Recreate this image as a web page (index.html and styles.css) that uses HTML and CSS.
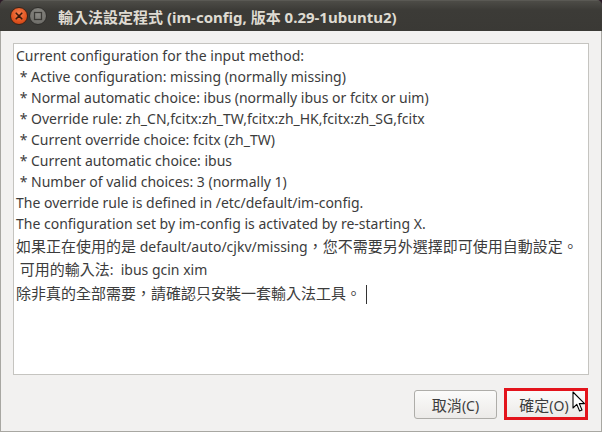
FILE: index.html
```html
<!DOCTYPE html>
<html lang="zh-Hant">
<head>
<meta charset="utf-8">
<title>輸入法設定程式</title>
<link rel="stylesheet" href="styles.css">
</head>
<body>
<div class="window">
  <div class="titlebar">
    <div class="wm-buttons">
      <span class="wm-btn close">
        <svg width="10" height="10" viewBox="0 0 10 10"><path d="M2.2 2.2 L7.8 7.8 M7.8 2.2 L2.2 7.8" stroke="#3a1a0c" stroke-width="1.6" stroke-linecap="round"/></svg>
      </span>
      <span class="wm-btn max">
        <svg width="10" height="10" viewBox="0 0 10 10"><rect x="1.5" y="1.5" width="7" height="7" fill="none" stroke="#3b3a36" stroke-width="1.3"/></svg>
      </span>
    </div>
    <div class="title">輸入法設定程式 (im-config, 版本 0.29-1ubuntu2)</div>
  </div>
  <div class="content">
    <div class="textview">
      <div class="line">Current configuration for the input method:</div>
      <div class="line">&nbsp;* Active configuration: missing (normally missing)</div>
      <div class="line">&nbsp;* Normal automatic choice: ibus (normally ibus or fcitx or uim)</div>
      <div class="line">&nbsp;* Override rule: zh_CN,fcitx:zh_TW,fcitx:zh_HK,fcitx:zh_SG,fcitx</div>
      <div class="line">&nbsp;* Current override choice: fcitx (zh_TW)</div>
      <div class="line">&nbsp;* Current automatic choice: ibus</div>
      <div class="line">&nbsp;* Number of valid choices: 3 (normally 1)</div>
      <div class="line">The override rule is defined in /etc/default/im-config.</div>
      <div class="line">The configuration set by im-config is activated by re-starting X.</div>
      <div class="line cjk first"><span class="zh">如果正在使用的是</span> default/auto/cjkv/missing<span class="zh">，您不需要另外選擇即可使用自動設定。</span></div>
      <div class="line cjk">&nbsp;<span class="zh">可用的輸入法</span>:&nbsp; ibus gcin xim</div>
      <div class="line cjk"><span class="zh">除非真的全部需要，請確認只安裝一套輸入法工具。</span><span class="caret"></span></div>
    </div>
    <div class="actions">
      <button class="btn"><span class="zh">取消</span>(C)</button>
      <div class="focus-ring"><button class="btn"><span class="zh">確定</span>(O)</button></div>
      <svg class="pointer" width="14" height="22" viewBox="0 0 14 22"><path d="M1 1 L1 17 L4.8 13.4 L7.6 20 L10 19 L7.3 12.6 L12.5 12.6 Z" fill="#fff" stroke="#000" stroke-width="1.1" stroke-linejoin="round"/></svg>
    </div>
  </div>
</div>
</body>
</html>
```

FILE: styles.css
```css
html, body {
  margin: 0;
  padding: 0;
  background: #2c1a27;
}
.window {
  width: 602px;
  height: 432px;
  box-sizing: border-box;
  display: flex;
  flex-direction: column;
  border-radius: 5px 5px 0 0;
  overflow: hidden;
  font-family: "Noto Sans", "Noto Sans CJK TC", sans-serif;
}
.titlebar {
  height: 31px;
  flex: none;
  display: flex;
  align-items: center;
  background: linear-gradient(#4d4c47, #3c3b37 30%, #3a3935);
  border-top: 1px solid #5a5954;
  box-sizing: border-box;
}
.wm-buttons {
  display: flex;
  gap: 1px;
  padding-left: 10px;
  width: 48px;
}
.wm-btn {
  width: 18px;
  height: 18px;
  border-radius: 50%;
  display: flex;
  align-items: center;
  justify-content: center;
  box-sizing: border-box;
}
.wm-btn.close {
  background: radial-gradient(circle at 50% 35%, #f7804f, #e0531f 60%, #b93c12);
  border: 1px solid #3a2418;
}
.wm-btn.max {
  background: radial-gradient(circle at 50% 35%, #8d8c87, #767570 60%, #5e5d59);
  border: 1px solid #2f2e2b;
}
.title {
  padding-left: 0;
  color: #dfdbd2;
  font-weight: bold;
  font-size: 15px;
  font-family: "Noto Sans", "Noto Sans CJK TC", sans-serif;
}
.content {
  flex: 1;
  background: #f2f1f0;
  border-left: 1px solid #a8a7a2;
  border-right: 1px solid #a8a7a2;
  border-bottom: 1px solid #a8a7a2;
  padding: 12px 12px 0 12px;
  display: flex;
  flex-direction: column;
}
.textview {
  height: 332px;
  box-sizing: border-box;
  background: #fff;
  border: 1px solid #c5c4c0;
  padding: 1px 3px 0 2px;
  color: #3c3c3c;
  font-size: 14px;
}
.zh {
  font-family: "Noto Sans CJK TC", sans-serif;
  font-size: 15px;
}
.line {
  height: 21px;
  line-height: 21px;
  white-space: pre;
}
.line.cjk {
  height: 24px;
  line-height: 24px;
}
.line.cjk.first {
  height: 23px;
  line-height: 23px;
}
.caret {
  display: inline-block;
  width: 1px;
  height: 19px;
  background: #333;
  margin-left: 5px;
  vertical-align: -5px;
}
.actions {
  position: relative;
  display: flex;
  justify-content: flex-end;
  align-items: center;
  gap: 7px;
  margin-top: 13px;
}
.btn {
  width: 83px;
  height: 29px;
  border: 1px solid #aeada9;
  border-radius: 3px;
  background: linear-gradient(#fbfbfa, #eceae8);
  color: #3c3c3c;
  font-size: 14px;
  font-family: "Noto Sans", "Noto Sans CJK TC", sans-serif;
  padding: 0;
}
.focus-ring {
  border: 3px solid #e3141c;
  display: flex;
  margin-right: 1px;
}
.focus-ring .btn {
  width: 78px;
  height: 26px;
  border: none;
  border-radius: 0;
  padding: 0 4px 0 0;
}
.pointer {
  position: absolute;
  right: 3px;
  top: 3px;
}
```
